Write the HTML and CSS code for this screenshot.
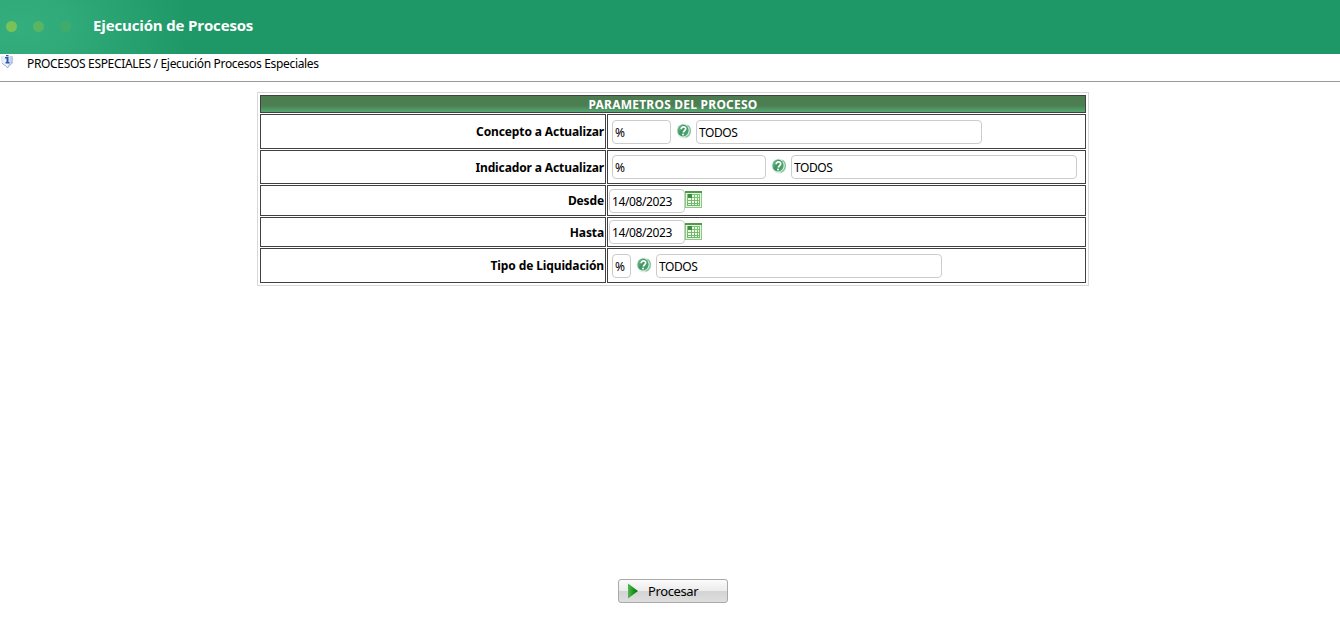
FILE: index.html
```html
<!DOCTYPE html>
<html lang="es">
<head>
<meta charset="UTF-8">
<title>Ejecución de Procesos</title>
<link rel="stylesheet" href="styles.css">
</head>
<body>

<!-- Shared icons -->
<svg class="sprite" width="0" height="0">
  <defs>
    <linearGradient id="helpFill" x1="0" y1="0" x2="1" y2="0.6">
      <stop offset="0" stop-color="#8cc5a0"/>
      <stop offset="0.5" stop-color="#3d9661"/>
      <stop offset="1" stop-color="#4da371"/>
    </linearGradient>
    <linearGradient id="calFill" x1="0" y1="0" x2="0" y2="1">
      <stop offset="0" stop-color="#7fc677"/>
      <stop offset="1" stop-color="#6cb564"/>
    </linearGradient>
  </defs>
  <symbol id="help" viewBox="0 0 16 16">
    <circle cx="8" cy="8" r="7.4" fill="#dcefe3"/>
    <path d="M11.500 2.200a6.800 6.800 0 0 1-2 12" fill="none" stroke="#84c29b" stroke-width="1.300"/>
    <ellipse cx="7" cy="7.500" rx="5.600" ry="6" fill="url(#helpFill)"/>
    <path d="M5.200 6.300C5 3.300 10 3.200 9.700 5.900 9.500 7.500 7.600 7.700 7.300 9.500" fill="none" stroke="#fff" stroke-width="1.700"/>
    <circle cx="7" cy="11.500" r="1" fill="#fff"/>
  </symbol>
  <symbol id="calendar" viewBox="0 0 17 17">
    <rect x="0" y="0" width="17" height="17" fill="#8bc984"/>
    <rect x="0" y="0" width="17" height="2" fill="#4c9f47"/>
    <rect x="1" y="2" width="15" height="14" fill="#e6f5e3"/>
    <rect x="2" y="3" width="13" height="12" fill="url(#calFill)"/>
    <rect x="3" y="3" width="4" height="4" fill="#3d8f3e"/>
    <path d="M7 4h2v2H7zM10 4h2v2h-2zM13 4h1v2h-1zM3 7h3v2H3zM7 7h2v2H7zM10 7h2v2h-2zM13 7h1v2h-1zM3 10h3v2H3zM7 10h2v2H7zM10 10h2v2h-2zM13 10h1v2h-1zM3 13h3v1H3zM7 13h2v1H7zM10 13h2v1h-2zM13 13h1v1h-1z" fill="#effaec"/>
  </symbol>
</svg>

<header class="banner">
  <span class="dot dot-1"></span>
  <span class="dot dot-2"></span>
  <span class="dot dot-3"></span>
  <h1>Ejecución de Procesos</h1>
</header>

<nav class="path">
  <svg class="info" width="14" height="14" viewBox="0 0 14 14">
    <defs>
      <linearGradient id="shield" x1="0" y1="0" x2="1" y2="0">
        <stop offset="0" stop-color="#dce8f6"/>
        <stop offset="0.5" stop-color="#f4f8fd"/>
        <stop offset="1" stop-color="#a9bedd"/>
      </linearGradient>
    </defs>
    <path d="M1 1C0 6 2 9.500 5 10.500L7.500 13.500 9 10.500C12 9.500 14 6 12.500 1z" fill="url(#shield)"/>
    <path d="M2 8C3.500 10 5.500 10.500 5.500 10.500L7.500 13 9 10.500C10.500 10 12 9 12.500 7" fill="none" stroke="#8fa8cf" stroke-width="0.900"/>
    <path d="M5 2h3.500v5h1v1.500H5.500V7h1V3.500H5z" fill="#2b58ad"/>
    <rect x="6" y="0" width="2.500" height="1.300" fill="#2b58ad"/>
  </svg>
  <span>PROCESOS ESPECIALES / Ejecución Procesos Especiales</span>
</nav>

<main>
  <table class="params">
    <colgroup>
      <col class="col-label">
      <col class="col-field">
    </colgroup>
    <tr class="row-title">
      <th colspan="2">PARAMETROS DEL PROCESO</th>
    </tr>
    <tr class="row-concepto">
      <td class="label">Concepto a Actualizar</td>
      <td><div class="field">
        <input type="text" class="w-code" value="%">
        <svg class="help"><use href="#help"/></svg>
        <input type="text" class="w-desc" value="TODOS">
      </div></td>
    </tr>
    <tr class="row-indicador">
      <td class="label">Indicador a Actualizar</td>
      <td><div class="field">
        <input type="text" class="w-long" value="%">
        <svg class="help"><use href="#help"/></svg>
        <input type="text" class="w-desc" value="TODOS">
      </div></td>
    </tr>
    <tr class="row-desde">
      <td class="label">Desde</td>
      <td><div class="field date">
        <input type="text" class="w-date" value="14/08/2023">
        <svg class="calendar"><use href="#calendar"/></svg>
      </div></td>
    </tr>
    <tr class="row-hasta">
      <td class="label">Hasta</td>
      <td><div class="field date">
        <input type="text" class="w-date" value="14/08/2023">
        <svg class="calendar"><use href="#calendar"/></svg>
      </div></td>
    </tr>
    <tr class="row-tipo">
      <td class="label">Tipo de Liquidación</td>
      <td><div class="field">
        <input type="text" class="w-min" value="%">
        <svg class="help"><use href="#help"/></svg>
        <input type="text" class="w-desc" value="TODOS">
      </div></td>
    </tr>
  </table>

  <button class="procesar" type="button">
    <svg width="10" height="16" viewBox="0 0 10 16">
      <defs>
        <linearGradient id="play" x1="0" y1="0" x2="1" y2="0">
          <stop offset="0" stop-color="#56b556"/>
          <stop offset="0.5" stop-color="#1d9a1d"/>
          <stop offset="1" stop-color="#0b6f0b"/>
        </linearGradient>
      </defs>
      <path d="M0 0.500L10 8L0 15.500z" fill="url(#play)"/>
    </svg>
    <span>Procesar</span>
  </button>
</main>

</body>
</html>
```

FILE: styles.css
```css
* {
  box-sizing: border-box;
}
body {
  margin: 0;
  background-color: #fff;
  color: #000;
  font-family: 'Noto Sans', sans-serif;
  font-size: 12px;
  overflow: hidden;
}
.sprite {
  display: block;
}
.banner {
  display: flex;
  align-items: center;
  height: 54px;
  padding: 0 0 2px 6px;
  background: radial-gradient(ellipse 170px 110px at 20px 27px, #34ae7c, #30aa79 30%, #1f9868 100%);
}
.banner h1 {
  margin: 0 0 2px 22px;
  color: #fff;
  font-family: 'Open Sans', sans-serif;
  font-size: 15px;
  font-weight: bold;
  letter-spacing: -0.15px;
  line-height: 20px;
}
.dot {
  width: 11px;
  height: 11px;
  margin-right: 16px;
  border-radius: 50%;
  background-color: #78c257;
}
.dot-2 {
  background-color: #58b663;
}
.dot-3 {
  margin-right: 0;
  background-color: #40ac6c;
}
.path {
  display: flex;
  height: 28px;
  border-bottom: 1px solid #999;
}
.path .info {
  margin: 1px 13px 0 0;
}
.path span {
  letter-spacing: -0.33px;
  line-height: 19px;
}
main {
  display: flex;
  flex-direction: column;
  align-items: flex-start;
}
.params {
  width: 832px;
  margin: 10px 0 0 257px;
  padding: 1px;
  table-layout: fixed;
  border: 1px solid #d8d8d8;
  border-collapse: separate;
  border-spacing: 1px;
}
.params th,
.params td {
  padding: 0;
  border: 1px solid #414141;
}
.params .label {
  padding: 1px 1px 0 0;
  font-weight: bold;
  letter-spacing: -0.12px;
  line-height: 16px;
  text-align: right;
}
.col-label {
  width: 346px;
}
.col-field {
  width: 479px;
}
.params th {
  padding-top: 1px;
  background: linear-gradient(#4c7c50, #4c7f53 60%, #55a873);
  color: #fff;
  letter-spacing: 0.23px;
  line-height: 15px;
}
.row-title {
  height: 18px;
}
.row-concepto {
  height: 35px;
}
.row-indicador {
  height: 34px;
}
.row-desde {
  height: 31px;
}
.row-hasta {
  height: 30px;
}
.row-tipo {
  height: 35px;
}
.field {
  display: flex;
  align-items: center;
  padding-left: 4px;
}
.field.date {
  padding-left: 1px;
}
.field input {
  height: 24px;
  padding: 1px 2px 0;
  border: 1px solid #ccc;
  border-radius: 4px;
  background-color: #fff;
  color: #000;
  font-family: 'Noto Sans', sans-serif;
  font-size: 12px;
  letter-spacing: -0.4px;
}
.w-code {
  width: 59px;
}
.w-long {
  width: 154px;
}
.w-date {
  width: 76px;
}
.w-min {
  width: 19px;
}
.w-desc {
  width: 286px;
}
.help {
  width: 16px;
  height: 16px;
  margin: 0 4px 2px 5px;
}
.calendar {
  width: 17px;
  height: 17px;
  margin-bottom: 2px;
}
.procesar {
  display: flex;
  align-items: center;
  width: 110px;
  height: 24px;
  margin: 293px 0 0 618px;
  padding: 0 0 0 9px;
  border: 1px solid #a9a9a9;
  border-radius: 3px;
  background: linear-gradient(#fbfbfb, #ececec 48%, #d4d4d4 52%, #dedede);
  color: #000;
  font-family: 'Noto Sans', sans-serif;
  font-size: 13px;
  letter-spacing: -0.4px;
}
.procesar span {
  margin-left: 10px;
}
```
